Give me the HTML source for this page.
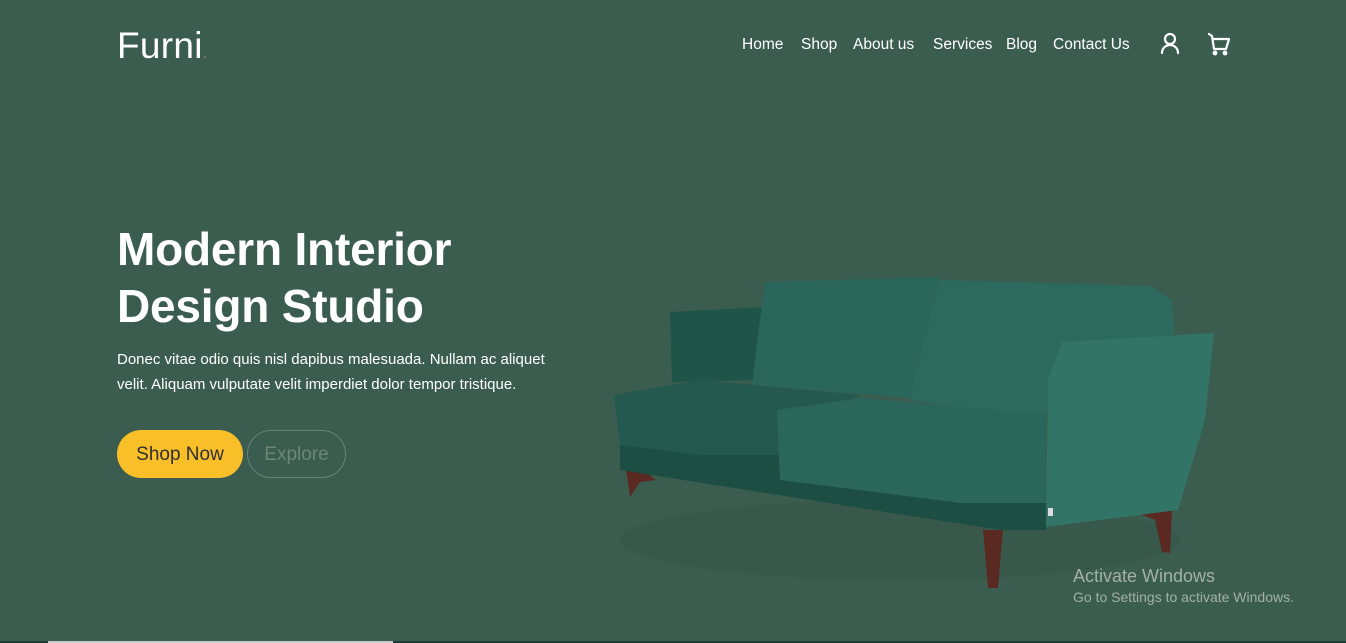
<!DOCTYPE html>
<html><head><meta charset="utf-8"><style>
*{margin:0;padding:0;box-sizing:border-box}
body{width:1346px;height:643px;background:#3b5d50;font-family:"Liberation Sans",sans-serif;color:#fff;position:relative;overflow:hidden}
.logo{position:absolute;left:117px;top:25px;font-size:37px;font-weight:400;letter-spacing:0.3px}
.logo span{color:#8a9a94;font-size:14px}
nav a{position:absolute;top:36px;color:#fff;text-decoration:none;font-size:15.5px;white-space:nowrap}
h1{position:absolute;left:117px;top:221px;font-size:46px;line-height:57px;font-weight:700;letter-spacing:-0.2px}
p{position:absolute;left:117px;top:347px;font-size:15px;line-height:25px;width:460px}
.b1{position:absolute;left:117px;top:430px;width:126px;height:48px;border-radius:24px;background:#f9bf29;color:#2f2f2f;font-size:19px;text-align:center;line-height:50px}
.b2{position:absolute;left:247px;top:430px;width:99px;height:48px;border-radius:24px;border:1px solid #6a8279;color:#6e857c;font-size:19px;text-align:center;line-height:48px}
.win{position:absolute;left:1073px;top:566px;color:#a3b0ab;font-size:18px}
.win small{display:block;font-size:14px;margin-top:2px}
</style></head><body>
<div class="logo">Furni<span>.</span></div>
<nav><a style="left:742px">Home</a><a style="left:801px">Shop</a><a style="left:853px">About us</a><a style="left:933px">Services</a><a style="left:1006px">Blog</a><a style="left:1053px">Contact Us</a></nav>
<svg style="position:absolute;left:1158px;top:31px" width="80" height="26" viewBox="0 0 80 26" fill="none" stroke="#fff" stroke-width="2.2" stroke-linecap="round" stroke-linejoin="round">
<circle cx="12" cy="8" r="5"/><path d="M4 22c0-5 4-8 8-8s8 3 8 8"/>
<path d="M51 3l3 2 2 13h12l3-10H55"/><circle cx="57" cy="22" r="1.3" fill="#fff"/><circle cx="67" cy="22" r="1.3" fill="#fff"/>
</svg>
<h1>Modern Interior<br>Design Studio</h1>
<p>Donec vitae odio quis nisl dapibus malesuada. Nullam ac aliquet velit. Aliquam vulputate velit imperdiet dolor tempor tristique.</p>
<div class="b1">Shop Now</div><div class="b2">Explore</div>
<svg style="position:absolute;left:0;top:0" width="1346" height="643">
<ellipse cx="900" cy="540" rx="280" ry="40" fill="#355448" opacity="0.5"/>
<polygon points="624,455 656,480 640,482 630,497" fill="#5a2a22"/>
<polygon points="983,530 1003,530 998,588 988,588" fill="#5a2a22"/>
<polygon points="1135,512 1172,508 1170,553 1162,552 1155,520" fill="#5a2a22"/>
<polygon points="670,312 765,307 765,380 672,382" fill="#1f5449"/>
<polygon points="765,282 940,277 935,400 752,385 760,320" fill="#2a665a"/>
<polygon points="940,280 1150,286 1172,300 1174,335 1060,345 1045,420 910,400" fill="#2b6a5d"/>
<polygon points="620,440 1046,460 1046,530 1000,530 620,470" fill="#1d4e44"/>
<polygon points="614,395 700,380 861,395 800,420 790,455 700,455 620,445" fill="#23594e"/>
<polygon points="777,410 861,398 1046,415 1046,503 960,503 780,480" fill="#2a665a"/>
<polygon points="1062,342 1214,333 1205,420 1178,510 1046,527 1048,380" fill="#327466"/>
<rect x="1048" y="508" width="5" height="8" fill="#ddd"/>
</svg>
<div class="win">Activate Windows<small>Go to Settings to activate Windows.</small></div>
<div style="position:absolute;left:0;top:641px;width:1346px;height:2px;background:#1e3d36"></div>
<div style="position:absolute;left:48px;top:641px;width:345px;height:2px;background:#c8c8c8"></div>
</body></html>
